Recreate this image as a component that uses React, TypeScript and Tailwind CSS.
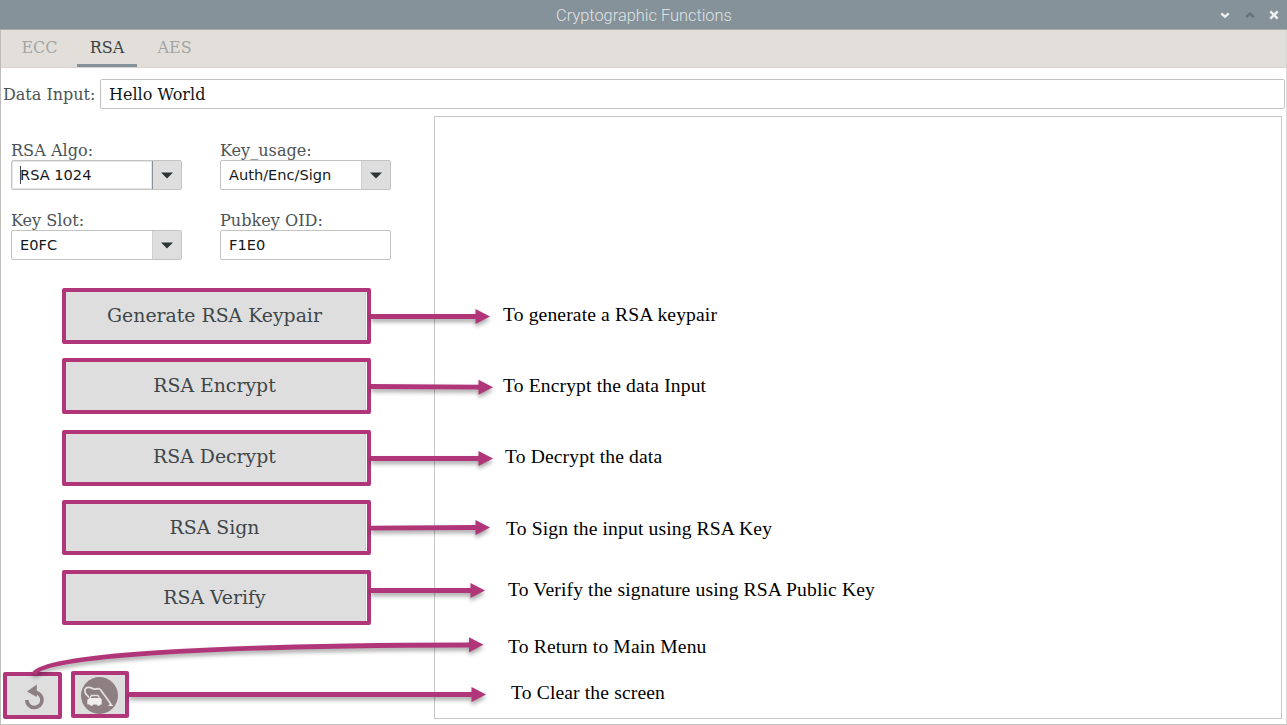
import React from "react";

const serif = "font-['DejaVu_Serif',serif]";

const tabs = [
  { name: "ECC", active: false },
  { name: "RSA", active: true },
  { name: "AES", active: false },
];

const actions = [
  { label: "Generate RSA Keypair", box: "h-[56px] pb-0" },
  { label: "RSA Encrypt", box: "mt-[14px] h-[56px] pb-0" },
  { label: "RSA Decrypt", box: "mt-[16px] h-[56px] pb-[2px]" },
  { label: "RSA Sign", box: "mt-[14px] h-[55px] pt-px" },
  { label: "RSA Verify", box: "mt-[15px] h-[55px] pt-[2px]" },
];

const notes = [
  { text: "To generate a RSA keypair", at: "left-[503px] top-[303px]" },
  { text: "To Encrypt the data Input", at: "left-[503px] top-[374px]" },
  { text: "To Decrypt the data", at: "left-[505px] top-[445px]" },
  { text: "To Sign the input using RSA Key", at: "left-[506px] top-[517px]" },
  { text: "To Verify the signature using RSA Public Key", at: "left-[508px] top-[578px]" },
  { text: "To Return to Main Menu", at: "left-[508px] top-[635px]" },
  { text: "To Clear the screen", at: "left-[511px] top-[681px]" },
];

const arrows = [
  { d: "M371 316.5H476", x: 490, y: 316.5 },
  { d: "M371 386.5L479 387.2", x: 493, y: 387.3 },
  { d: "M371 458.5H479", x: 493, y: 458.5 },
  { d: "M371 528.2L476 527.5", x: 490, y: 527.5 },
  { d: "M371 590.5H471", x: 485, y: 590.5 },
  { d: "M34 674C44 656 200 645.5 469 645", x: 483.5, y: 644.8 },
  { d: "M129 694.5H472", x: 486, y: 694.5 },
];

function Field({
  label,
  value,
  combo = false,
  focused = false,
}: {
  label: string;
  value: string;
  combo?: boolean;
  focused?: boolean;
}) {
  return (
    <div className="w-[171px]">
      <div className={`${serif} h-5 whitespace-nowrap pt-px text-[16.1px] leading-5 text-[#4c5356]`}>{label}</div>
      <div className="flex h-[30px] rounded-[2px] border border-[#c3c3bf] bg-white">
        <div
          className={`flex flex-1 items-center pl-2 font-['DejaVu_Sans',sans-serif] text-[14.6px] text-[#15191b] ${
            focused ? "shadow-[inset_0_0_0_1px_#e3e6e6]" : ""
          }`}
        >
          {focused && <span className="-mr-px h-[18px] w-px bg-[#444]" />}
          {value}
        </div>
        {combo && (
          <div
            className={`flex w-[29px] items-center justify-center border-l bg-[#dedede] ${
              focused ? "border-[#87939a]" : "border-[#cfcfcf]"
            }`}
          >
            <svg width="12" height="7" viewBox="0 0 12 7" fill="#2e3436">
              <path d="M0 .5H12L6 6.5Z" />
            </svg>
          </div>
        )}
      </div>
    </div>
  );
}

export default function App() {
  return (
    <div className="relative flex h-[725px] w-[1287px] flex-col overflow-hidden bg-white">
      <header className="flex h-[30px] shrink-0 items-center border-b border-[#a9aaa8] bg-[#859299]">
        <div className="w-[85px]" />
        <h1 className="flex-1 pl-[4px] pt-px text-center font-[Roboto,sans-serif] text-[16.4px] font-light leading-[29px] text-[#dfe3e5]">
          Cryptographic Functions
        </h1>
        <div className="flex w-[88px] items-center justify-between pl-[21px] pr-[8px] pt-px">
          <svg width="10" height="10" viewBox="0 0 10 10" fill="none" stroke="#f0f2f2" strokeWidth="2.4">
            <path d="M1.2 3.3L5 6.6L8.8 3.3" />
          </svg>
          <svg width="10" height="10" viewBox="0 0 10 10" fill="none" stroke="#6b7275" strokeWidth="2.4">
            <path d="M1.2 7L5 3.7L8.8 7" />
          </svg>
          <svg width="10" height="10" viewBox="0 0 10 10" fill="none" stroke="#f0f2f2" strokeWidth="2.5">
            <path d="M1.3 1.3L8.7 8.7M8.7 1.3L1.3 8.7" />
          </svg>
        </div>
      </header>

      <main className="flex min-h-0 flex-1 flex-col border-x border-b border-l-[#bdbdb9] border-r-[#d8d8d5] border-b-[#c3c3bf]">
        <nav className={`${serif} flex h-[38px] shrink-0 border-b border-[#ddd2cf] bg-[#e2dfdb] pl-[9px] text-[16px] leading-[36px]`}>
          {tabs.map((t) => (
            <div
              key={t.name}
              className={
                t.active
                  ? "mx-[8px] h-[37px] w-[60px] border-b-[3px] border-[#859299] text-center text-[#3c4346]"
                  : "h-[37px] w-[59px] text-center text-[#a3a5a4]"
              }
            >
              {t.name}
            </div>
          ))}
        </nav>

        <div className={`${serif} mt-[11px] flex h-[30px] shrink-0 items-center pl-[2px] pr-px text-[16px]`}>
          <label className="w-[97px] whitespace-nowrap pt-px text-[#4c5356]">Data Input:</label>
          <div className="flex h-[30px] flex-1 items-center rounded-[2px] border border-[#c3c3bf] pl-[8px] pt-px text-[#111516]">
            Hello World
          </div>
        </div>

        <div className="mt-[7px] flex min-h-0 flex-1">
          <section className="flex w-[433px] shrink-0 flex-col">
            <div className="ml-[10px] mt-[24px] grid w-[381px] grid-cols-[171px_171px] gap-x-[38px] gap-y-[20px]">
              <Field label="RSA Algo:" value="RSA 1024" combo focused />
              <Field label="Key_usage:" value="Auth/Enc/Sign" combo />
              <Field label="Key Slot:" value="E0FC" combo />
              <Field label="Pubkey OID:" value="F1E0" />
            </div>

            <div className="ml-[61px] mt-[28px] flex w-[309px] flex-col">
              {actions.map((a) => (
                <button
                  key={a.label}
                  className={`${serif} ${a.box} flex items-center justify-center rounded-[2px] border-4 border-[#b03679] bg-[#dedede] pr-[4px] text-[18.85px] leading-none text-[#3f4649] shadow-[inset_-1px_0_0_#fff,inset_-2px_0_0_#d0d0d0]`}
                >
                  {a.label}
                </button>
              ))}
            </div>

            <div className="ml-[2px] mt-[46px] flex items-start gap-[9px]">
              <button className="mt-px flex h-[47px] w-[59px] items-center justify-center rounded-[2px] border-4 border-[#b03679] bg-[#dedede]">
                <svg width="24" height="28" viewBox="0 0 24 28" fill="none">
                  <path d="M5.8 17.9A7.6 7.6 0 1 0 14.5 10.4" stroke="#8d7f82" strokeWidth="3.7" />
                  <path d="M6 9.6L15.8 2.5V15Z" fill="#8d7f82" />
                </svg>
              </button>
              <button className="flex h-[47px] w-[58px] items-center justify-center rounded-[2px] border-4 border-[#b03679] bg-[#dedede]">
                <svg width="40" height="39" viewBox="0 0 40 39" fill="none">
                  <circle cx="19.5" cy="20.5" r="18.5" fill="#8d7f82" />
                  <path
                    d="M9 22.5C7.5 20 4.8 19.5 4.8 16C4.8 12 9 11.5 12 13.3C15 15.2 16.5 13.6 18.5 13.6C20.5 13.6 21 15.5 22.5 17.5C25 21 28 24.5 31 29.5"
                    stroke="#e4e0e1"
                    strokeWidth="1.7"
                  />
                  <path d="M10 22.8L11.5 20.5H18L19.5 22.8" stroke="#e4e0e1" strokeWidth="1.3" />
                  <path d="M7.3 24.5H21.7V29.5H20.5A2.2 2.2 0 0 1 16.5 29.5H13.5A2.2 2.2 0 0 1 9.5 29.5H7.3Z" fill="#f0eeee" />
                  <path d="M9 23H20.5L21.7 25H7.8Z" fill="#f0eeee" />
                  <path d="M28 31L30.5 28.5L33.5 31Z" fill="#f0eeee" />
                </svg>
              </button>
            </div>
          </section>
          <section className="mb-[5px] mr-[4px] flex-1 border border-[#c8c8c6]" />
        </div>
      </main>

      <svg
        className="pointer-events-none absolute inset-0 drop-shadow-[0_3px_2px_rgba(0,0,0,0.35)]"
        width="1287"
        height="725"
        viewBox="0 0 1287 725"
      >
        {arrows.map((a) => (
          <g key={a.d}>
            <path d={a.d} fill="none" stroke="#b03679" strokeWidth="4.8" />
            <path d={`M${a.x - 14.5} ${a.y - 7.5}L${a.x} ${a.y}L${a.x - 14.5} ${a.y + 7.5}Z`} fill="#b03679" />
          </g>
        ))}
      </svg>

      {notes.map((n) => (
        <p
          key={n.text}
          className={`absolute ${n.at} whitespace-nowrap font-['Liberation_Serif',serif] text-[19.6px] leading-6 tracking-[0.13px] text-black`}
        >
          {n.text}
        </p>
      ))}
    </div>
  );
}
